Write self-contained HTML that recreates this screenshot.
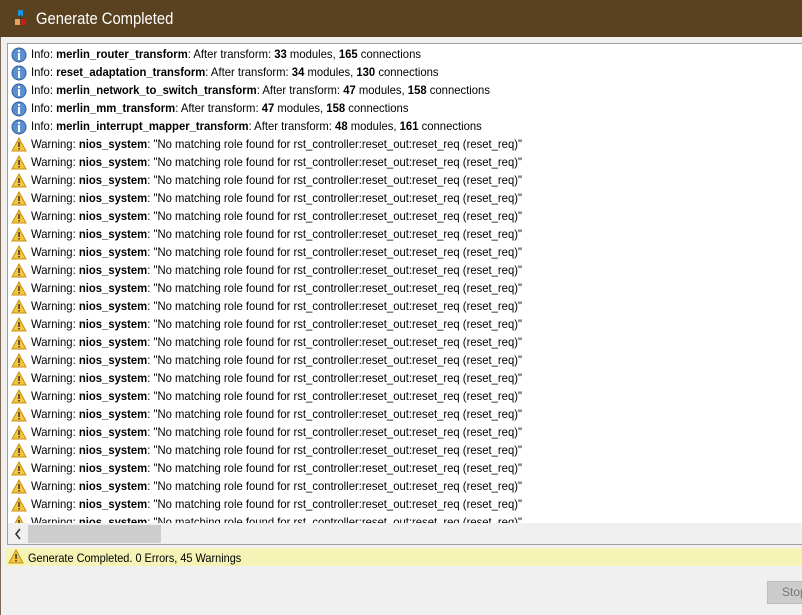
<!DOCTYPE html><html><head><style>
body{margin:0;width:802px;height:615px;overflow:hidden;background:#f0f0f0;font-family:"Liberation Sans",sans-serif;position:relative}
.title{position:absolute;left:0;top:0;width:802px;height:37px;background:#5a411f;color:#fff;font-size:17px}
.title span{position:absolute;left:36px;top:9px;transform:scaleX(0.87);transform-origin:left}
.lb{position:absolute;left:0;top:37px;width:1px;height:578px;background:#7a6a55}
.panel{position:absolute;left:7px;top:43px;width:795px;height:500px;border:1px solid #a0a0a0;border-right:none;background:#fff;overflow:hidden}
.rows{position:absolute;left:0;top:1px;width:795px;height:478px;overflow:hidden}
.r{height:18px;line-height:18px;font-size:12px;white-space:nowrap;position:relative;color:#000}
.r span{position:absolute;left:23px;top:0;transform:scaleX(0.94);transform-origin:left}
.r svg{position:absolute;left:3px;top:2px}
.sb{position:absolute;left:0;top:479px;width:795px;height:21px;background:#f0f0f0}
.thumb{position:absolute;left:20px;top:2px;width:133px;height:18px;background:#cdcdcd}
.status{position:absolute;left:6px;top:548px;width:796px;height:18px;background:#f5f3b5;font-size:12px;line-height:18px}
.status span{position:absolute;left:22px;top:1px;transform:scaleX(0.91);transform-origin:left}
.btn{position:absolute;left:767px;top:581px;width:40px;height:21px;background:#cccccc;border:1px solid #bdbdbd;color:#777;font-size:12px;line-height:21px;padding-left:14px}
</style></head><body>
<div class="title"><svg style="position:absolute;left:14px;top:10px" width="14" height="18"><rect x="4" y="0" width="5" height="6" fill="#1a90e0"/><rect x="6" y="5" width="1" height="5" fill="#333"/><rect x="1" y="9" width="5" height="6" fill="#e9a05a"/><rect x="7" y="9" width="5" height="6" fill="#d01818"/></svg><span>Generate Completed</span></div>
<div class="lb"></div>
<div class="panel"><div class="rows" id="rows"></div>
<div class="sb"><svg style="position:absolute;left:6px;top:5px" width="8" height="12"><path d="M6 1 L2 6 L6 11" stroke="#333" stroke-width="1.6" fill="none"/></svg><div class="thumb"></div></div></div>
<div class="status"><svg style="position:absolute;left:2px;top:1px" width="16" height="15"><path d="M8 1 L15 14 L1 14 Z" fill="#f5c542" stroke="#c89010"/><rect x="7.3" y="5" width="1.5" height="5" fill="#333"/><rect x="7.3" y="11" width="1.5" height="1.5" fill="#333"/></svg><span>Generate Completed. 0 Errors, 45 Warnings</span></div>
<div class="btn">Stop</div>
<script>
var info='<svg width="16" height="16"><circle cx="8" cy="8" r="7" fill="#5b8fd0" stroke="#2d5fa0"/><rect x="7" y="3" width="2" height="2" fill="#fff"/><rect x="7" y="6" width="2" height="7" fill="#fff"/></svg>';
var warn='<svg width="16" height="15"><path d="M8 1 L15 14 L1 14 Z" fill="#f5c542" stroke="#c89010"/><rect x="7.3" y="5" width="1.5" height="5" fill="#333"/><rect x="7.3" y="11" width="1.5" height="1.5" fill="#333"/></svg>';
var I=[["merlin_router_transform",33,165],["reset_adaptation_transform",34,130],["merlin_network_to_switch_transform",47,158],["merlin_mm_transform",47,158],["merlin_interrupt_mapper_transform",48,161]];
var h='';I.forEach(function(a){h+='<div class="r">'+info+'<span>Info: <b>'+a[0]+'</b>: After transform: <b>'+a[1]+'</b> modules, <b>'+a[2]+'</b> connections</span></div>'});
for(var i=0;i<22;i++)h+='<div class="r">'+warn+'<span>Warning: <b>nios_system</b>: "No matching role found for rst_controller:reset_out:reset_req (reset_req)"</span></div>';
document.getElementById('rows').innerHTML=h;
</script></body></html>
